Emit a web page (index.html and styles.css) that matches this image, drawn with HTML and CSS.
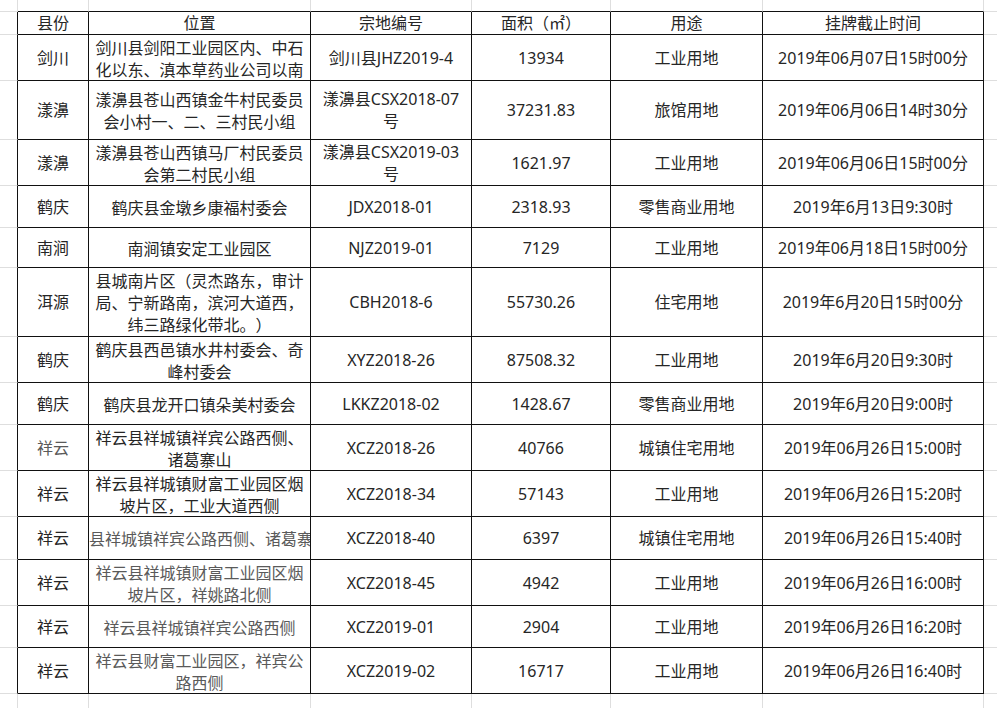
FILE: index.html
```html
<!DOCTYPE html>
<html lang="zh-CN">
<head>
<meta charset="utf-8">
<title>挂牌出让地块</title>
<link rel="stylesheet" href="styles.css">
</head>
<body>
<table class="sheet">
  <colgroup>
    <col class="c-edge-l">
    <col class="c-county">
    <col class="c-loc">
    <col class="c-code">
    <col class="c-area">
    <col class="c-use">
    <col class="c-time">
    <col class="c-edge-r">
  </colgroup>
  <tbody>
    <tr class="top h12"><td class="g"></td><td></td><td></td><td></td><td></td><td></td><td></td><td class="r"></td></tr>
    <tr class="h23 head"><td class="l"></td><td>县份</td><td>位置</td><td>宗地编号</td><td>面积（㎡）</td><td>用途</td><td>挂牌截止时间</td><td class="r"></td></tr>
    <tr class="h46"><td class="l"></td><td>剑川</td><td class="wrap loc">剑川县剑阳工业园区内、中石化以东、滇本草药业公司以南</td><td class="wrap">剑川县JHZ2019-4</td><td>13934</td><td>工业用地</td><td>2019年06月07日15时00分</td><td class="r"></td></tr>
    <tr class="h59"><td class="l"></td><td>漾濞</td><td class="wrap loc">漾濞县苍山西镇金牛村民委员会小村一、二、三村民小组</td><td class="wrap">漾濞县CSX2018-07号</td><td>37231.83</td><td>旅馆用地</td><td>2019年06月06日14时30分</td><td class="r"></td></tr>
    <tr class="h46"><td class="l"></td><td>漾濞</td><td class="wrap loc">漾濞县苍山西镇马厂村民委员会第二村民小组</td><td class="wrap">漾濞县CSX2019-03号</td><td>1621.97</td><td>工业用地</td><td>2019年06月06日15时00分</td><td class="r"></td></tr>
    <tr class="h42"><td class="l"></td><td>鹤庆</td><td class="wrap loc">鹤庆县金墩乡康福村委会</td><td class="wrap">JDX2018-01</td><td>2318.93</td><td>零售商业用地</td><td>2019年6月13日9:30时</td><td class="r"></td></tr>
    <tr class="h40"><td class="l"></td><td>南涧</td><td class="wrap loc">南涧镇安定工业园区</td><td class="wrap">NJZ2019-01</td><td>7129</td><td>工业用地</td><td>2019年06月18日15时00分</td><td class="r"></td></tr>
    <tr class="h69"><td class="l"></td><td>洱源</td><td class="wrap loc">县城南片区（灵杰路东，审计局、宁新路南，滨河大道西，纬三路绿化带北。）</td><td class="wrap">CBH2018-6</td><td>55730.26</td><td>住宅用地</td><td>2019年6月20日15时00分</td><td class="r"></td></tr>
    <tr class="h46"><td class="l"></td><td>鹤庆</td><td class="wrap loc">鹤庆县西邑镇水井村委会、奇峰村委会</td><td class="wrap">XYZ2018-26</td><td>87508.32</td><td>工业用地</td><td>2019年6月20日9:30时</td><td class="r"></td></tr>
    <tr class="h42"><td class="l"></td><td>鹤庆</td><td class="wrap loc">鹤庆县龙开口镇朵美村委会</td><td class="wrap">LKKZ2018-02</td><td>1428.67</td><td>零售商业用地</td><td>2019年6月20日9:00时</td><td class="r"></td></tr>
    <tr class="h46"><td class="l"></td><td class="muted">祥云</td><td class="wrap loc">祥云县祥城镇祥宾公路西侧、诸葛寨山</td><td class="wrap">XCZ2018-26</td><td>40766</td><td>城镇住宅用地</td><td>2019年06月26日15:00时</td><td class="r"></td></tr>
    <tr class="h46"><td class="l"></td><td>祥云</td><td class="wrap loc">祥云县祥城镇财富工业园区烟坡片区，工业大道西侧</td><td class="wrap">XCZ2018-34</td><td>57143</td><td>工业用地</td><td>2019年06月26日15:20时</td><td class="r"></td></tr>
    <tr class="h43"><td class="l"></td><td>祥云</td><td class="clip loc muted"><div class="clip-box"><span class="clip-text">祥云县祥城镇祥宾公路西侧、诸葛寨山</span></div></td><td class="wrap">XCZ2018-40</td><td>6397</td><td>城镇住宅用地</td><td>2019年06月26日15:40时</td><td class="r"></td></tr>
    <tr class="h46"><td class="l"></td><td>祥云</td><td class="wrap loc muted">祥云县祥城镇财富工业园区烟坡片区，祥姚路北侧</td><td class="wrap">XCZ2018-45</td><td>4942</td><td>工业用地</td><td>2019年06月26日16:00时</td><td class="r"></td></tr>
    <tr class="h42"><td class="l"></td><td>祥云</td><td class="wrap loc muted">祥云县祥城镇祥宾公路西侧</td><td class="wrap">XCZ2019-01</td><td>2904</td><td>工业用地</td><td>2019年06月26日16:20时</td><td class="r"></td></tr>
    <tr class="h46"><td class="l"></td><td>祥云</td><td class="wrap loc muted">祥云县财富工业园区，祥宾公路西侧</td><td class="wrap">XCZ2019-02</td><td>16717</td><td>工业用地</td><td>2019年06月26日16:40时</td><td class="r"></td></tr>
    <tr class="bottom h14"><td></td><td></td><td></td><td></td><td></td><td></td><td></td><td class="r"></td></tr>
  </tbody>
</table>
</body>
</html>
```
FILE: styles.css
```css
html, body {
  margin: 0;
  padding: 0;
  background: #ffffff;
}

body {
  width: 997px;
  height: 708px;
  overflow: hidden;
}

.sheet {
  width: 997px;
  table-layout: fixed;
  border-collapse: separate;
  border-spacing: 0;
  font-family: "Noto Sans", "Noto Sans CJK SC", sans-serif;
  font-size: 16px;
  line-height: 22px;
  color: #262626;
  text-spacing-trim: space-all;
}

.c-edge-l { width: 18px; }
.c-county { width: 71px; }
.c-loc { width: 222px; }
.c-code { width: 161px; }
.c-area { width: 139px; }
.c-use { width: 152px; }
.c-time { width: 221px; }
.c-edge-r { width: 13px; }

.sheet td {
  box-sizing: border-box;
  padding: 0 5px;
  border-right: 1px solid #111;
  border-bottom: 1px solid #111;
  text-align: center;
  vertical-align: middle;
  white-space: nowrap;
  overflow: hidden;
}

.sheet td.wrap {
  white-space: normal;
}

.sheet td.loc {
  font-family: "Noto Sans CJK SC", "Noto Sans", sans-serif;
  text-spacing-trim: space-all;
}

.sheet td.clip {
  padding: 0;
  text-align: left;
}

.clip-box {
  width: 221px;
  overflow: hidden;
  white-space: nowrap;
}

.clip-text {
  display: inline-block;
  margin-left: -32px;
}

.sheet td.muted {
  color: #5a5a5a;
}

/* spreadsheet gridlines outside the bordered area */
.sheet tr.top td {
  border-right-color: #dedede;
}

.sheet td.g {
  border-bottom-color: #dedede;
}

.sheet td.l {
  padding: 0;
  border-bottom-color: #dedede;
}

.sheet td.r {
  padding: 0;
  border-right: 0;
  border-bottom-color: #dedede;
}

.sheet tr.bottom td {
  border-right-color: #dedede;
  border-bottom: 0;
}

.head td {
  line-height: 20px;
}

.h12 { height: 12px; }
.h14 { height: 14px; }
.h23 { height: 23px; }
.h40 { height: 40px; }
.h42 { height: 42px; }
.h43 { height: 43px; }
.h46 { height: 46px; }
.h59 { height: 59px; }
.h69 { height: 69px; }
```
